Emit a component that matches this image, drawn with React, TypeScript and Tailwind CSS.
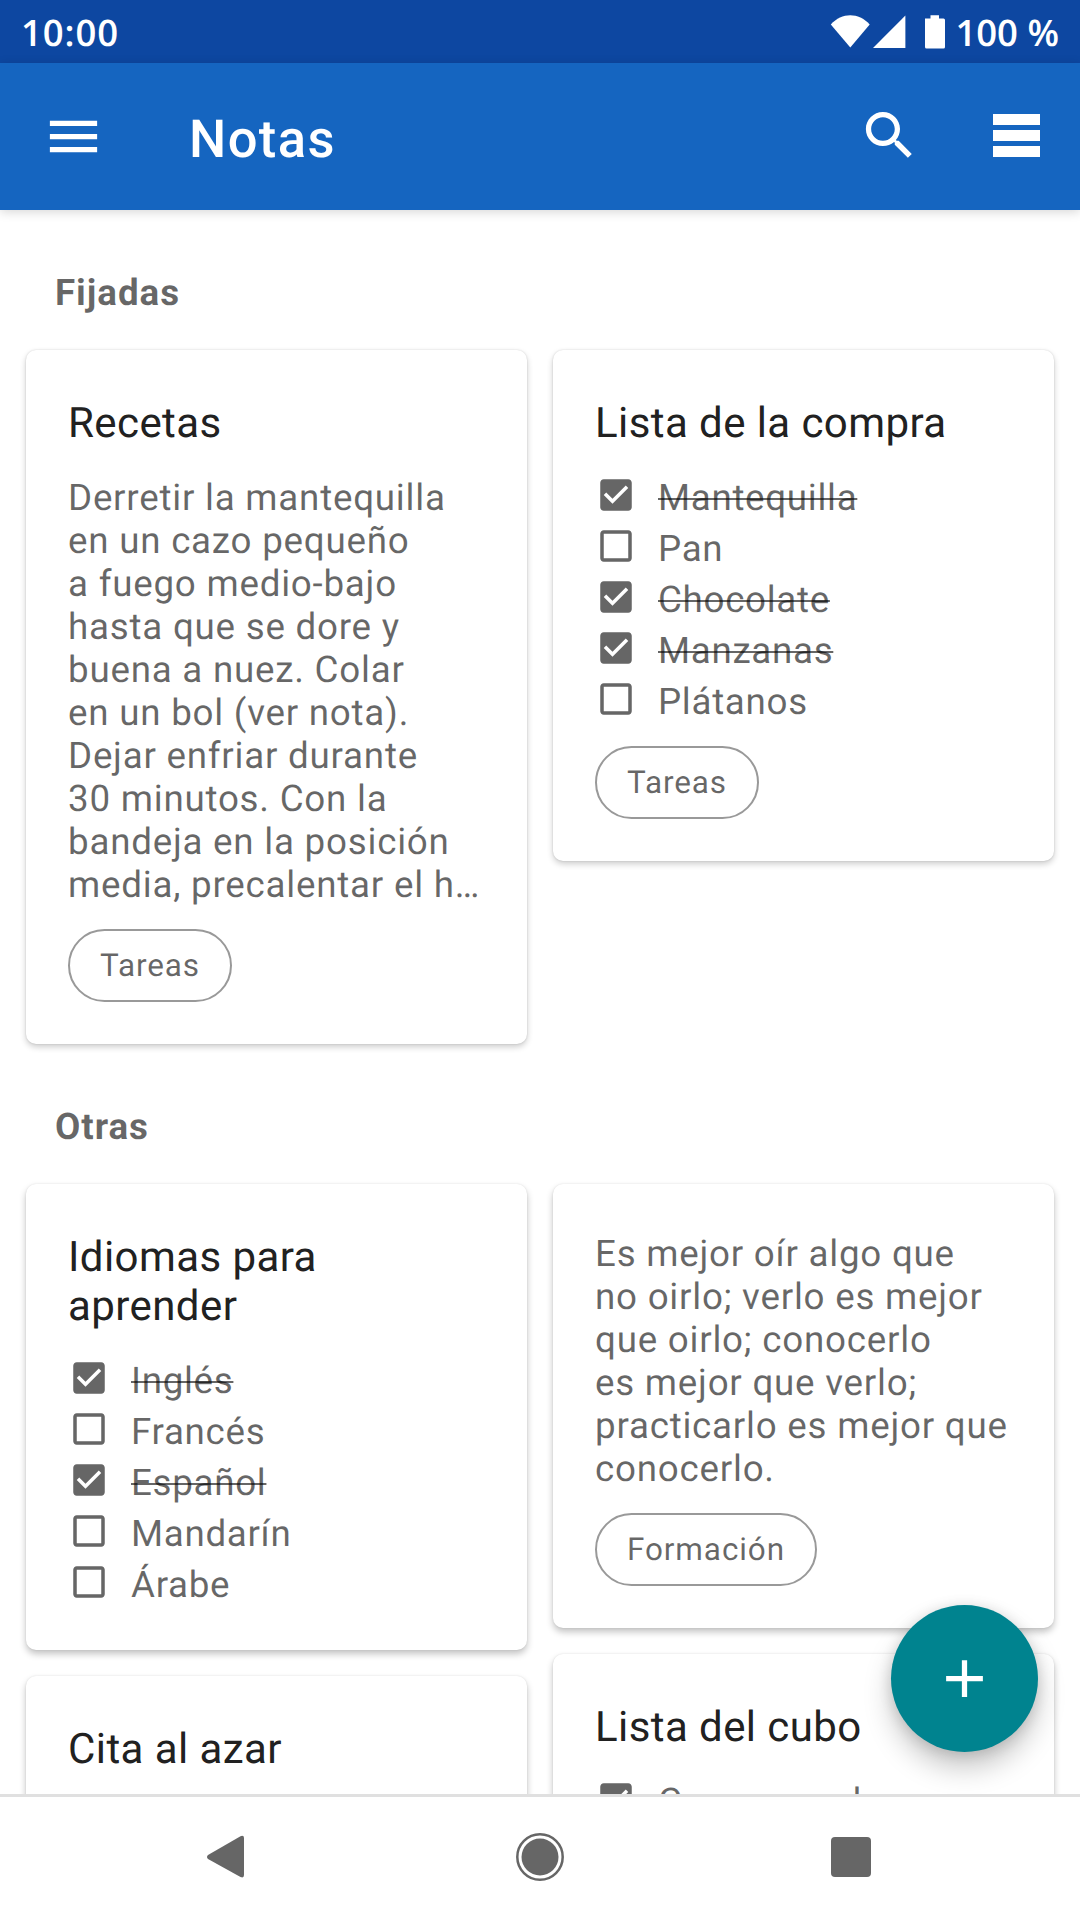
import React from "react";

type Item = { label: string; done: boolean };
type Note = { title?: string[]; lines?: string[]; items?: Item[]; chip?: string };

const recetas: Note = {
  title: ["Recetas"],
  lines: [
    "Derretir la mantequilla",
    "en un cazo pequeño",
    "a fuego medio-bajo",
    "hasta que se dore y",
    "buena a nuez. Colar",
    "en un bol (ver nota).",
    "Dejar enfriar durante",
    "30 minutos. Con la",
    "bandeja en la posición",
    "media, precalentar el h…",
  ],
  chip: "Tareas",
};

const compra: Note = {
  title: ["Lista de la compra"],
  items: [
    { label: "Mantequilla", done: true },
    { label: "Pan", done: false },
    { label: "Chocolate", done: true },
    { label: "Manzanas", done: true },
    { label: "Plátanos", done: false },
  ],
  chip: "Tareas",
};

const idiomas: Note = {
  title: ["Idiomas para", "aprender"],
  items: [
    { label: "Inglés", done: true },
    { label: "Francés", done: false },
    { label: "Español", done: true },
    { label: "Mandarín", done: false },
    { label: "Árabe", done: false },
  ],
};

const mejor: Note = {
  lines: [
    "Es mejor oír algo que",
    "no oirlo; verlo es mejor",
    "que oirlo; conocerlo",
    "es mejor que verlo;",
    "practicarlo es mejor que",
    "conocerlo.",
  ],
  chip: "Formación",
};

const cita: Note = { title: ["Cita al azar"] };

const cubo: Note = {
  title: ["Lista del cubo"],
  items: [{ label: "Comer una lasagna", done: true }],
};

function Checkbox({ done }: { done: boolean }) {
  return (
    <svg viewBox="0 0 24 24" className="-mt-[2.5px] size-[42px] shrink-0 fill-[#666666]">
      {done ? (
        <path d="M19 3H5c-1.11 0-2 .9-2 2v14c0 1.1.89 2 2 2h14c1.11 0 2-.9 2-2V5c0-1.1-.89-2-2-2zm-9 14l-5-5 1.41-1.41L10 14.17l7.59-7.59L19 8l-9 9z" />
      ) : (
        <path d="M19 5v14H5V5h14m0-2H5c-1.1 0-2 .9-2 2v14c0 1.1.9 2 2 2h14c1.1 0 2-.9 2-2V5c0-1.1-.9-2-2-2z" />
      )}
    </svg>
  );
}

function Card({ note, elevated }: { note: Note; elevated: boolean }) {
  return (
    <article
      className={
        elevated
          ? "rounded-[10px] bg-white px-[42px] pt-12 shadow-[0_0_2px_rgba(0,0,0,0.1),0_4px_7px_rgba(0,0,0,0.24)]"
          : "rounded-[10px] bg-white px-[42px] pt-12 shadow-[0_0_2px_rgba(0,0,0,0.14),0_3px_6px_rgba(0,0,0,0.2)]"
      }
    >
      {note.title && (
        <h3 className="mb-7 pt-px text-[42px] leading-[49px] tracking-[0.42px] whitespace-nowrap text-[#212121]">
          {note.title.map((t) => (
            <span key={t} className="block">{t}</span>
          ))}
        </h3>
      )}
      {note.lines && (
        <p className="text-[36.75px] leading-[43px] tracking-[0.76px] whitespace-nowrap text-black/60">
          {note.lines.map((l) => (
            <span key={l} className="block">{l}</span>
          ))}
        </p>
      )}
      {note.items && (
        <ul className="flex flex-col gap-2 text-[36.75px] leading-[43px] tracking-[0.68px] text-black/60">
          {note.items.map((i) => (
            <li key={i.label} className="flex h-[43px] items-start gap-[21px]">
              <Checkbox done={i.done} />
              <span className={i.done ? "whitespace-nowrap line-through decoration-2" : "whitespace-nowrap"}>{i.label}</span>
            </li>
          ))}
        </ul>
      )}
      {note.chip ? (
        <div className="flex pt-[23px] pb-[42px]">
          <span className="flex h-[73px] items-center rounded-full border-2 border-[#999999] px-[30px] text-[31.5px] tracking-[0.88px] text-black/60">
            {note.chip}
          </span>
        </div>
      ) : (
        <div className="h-11" />
      )}
    </article>
  );
}

function Section({ name, left, right, elevated = false }: { name: string; left: Note[]; right: Note[]; elevated?: boolean }) {
  return (
    <section className="px-[26px] pt-[61px]">
      <h2 className="mb-9 pl-[29px] text-[36.75px] leading-[43px] font-bold tracking-[0.95px] text-black/60">{name}</h2>
      <div className="grid grid-cols-2 items-start gap-[26px]">
        {[left, right].map((col, i) => (
          <div key={i} className="flex flex-col gap-[26px]">
            {col.map((n, j) => (
              <Card key={j} note={n} elevated={elevated} />
            ))}
          </div>
        ))}
      </div>
    </section>
  );
}

export default function App() {
  return (
    <div className="relative flex h-[1920px] w-[1080px] flex-col overflow-hidden bg-white font-['Roboto',sans-serif] [text-rendering:geometricPrecision]">
      <div className="z-10 flex h-[63px] shrink-0 items-center justify-between bg-[#0d47a1] px-[21px] font-['Open_Sans',sans-serif] text-[36.5px] leading-none font-semibold text-white">
        <span className="pt-[2px] tracking-[0.9px]">10:00</span>
        <div className="flex items-center">
          <svg viewBox="0 0 116 34" className="mr-[9px] h-[34px] w-[116px] fill-white">
            <path d="M0.800 9.500C12 -2.800 28.500 -2.800 39.700 9.500L20.300 32.600z" />
            <path d="M75.400 0.500V33H43z" />
            <path d="M95 3.500h5.500V0.300h8.500V3.500h4.500a1.500 1.500 0 0 1 1.500 1.500v27a1.500 1.500 0 0 1-1.500 1.500h-17a1.500 1.500 0 0 1-1.500-1.500z" />
          </svg>
          <span className="pt-[2px]">100 %</span>
        </div>
      </div>

      <header className="z-10 flex h-[147px] shrink-0 items-center bg-[#1565c0] pr-8 pl-[42px] text-white shadow-[0_2px_10px_rgba(0,0,0,0.16)]">
        <svg viewBox="0 0 24 24" className="size-[63px] fill-white">
          <path d="M3 18h18v-2H3v2zm0-5h18v-2H3v2zm0-7v2h18V6H3z" />
        </svg>
        <h1 className="ml-[84px] grow pt-[5px] text-[52.5px] leading-none font-medium tracking-[1.4px]">Notas</h1>
        <svg viewBox="0 0 24 24" className="mb-[2px] size-[63px] fill-white">
          <path d="M15.500 14h-.79l-.28-.27C15.410 12.590 16 11.110 16 9.500 16 5.910 13.090 3 9.500 3S3 5.910 3 9.500 5.910 16 9.500 16c1.610 0 3.090-.59 4.230-1.570l.27.28v.79l5 4.990L20.490 19l-4.990-5zm-6 0C7.010 14 5 11.990 5 9.500S7.010 5 9.500 5 14 7.010 14 9.500 11.990 14 9.500 14z" />
        </svg>
        <div className="mr-2 mb-[2px] ml-[72px] flex h-[43px] w-[47px] flex-col justify-between">
          <span className="h-[11px] bg-white" />
          <span className="h-[11px] bg-white" />
          <span className="h-[11px] bg-white" />
        </div>
      </header>

      <main className="h-[1584px] shrink-0 overflow-hidden">
        <Section name="Fijadas" left={[recetas]} right={[compra]} />
        <Section name="Otras" left={[idiomas, cita]} right={[mejor, cubo]} elevated />
      </main>

      <button className="absolute top-[1605px] left-[891px] flex size-[147px] items-center justify-center rounded-full bg-[#00838f] shadow-[0_16px_28px_rgba(0,0,0,0.22),0_2px_14px_rgba(0,0,0,0.14)]">
        <svg viewBox="0 0 24 24" className="size-[63px] fill-white">
          <path d="M19 13h-6v6h-2v-6H5v-2h6V5h2v6h6v2z" />
        </svg>
      </button>

      <nav className="z-10 flex h-[126px] shrink-0 items-center justify-between border-t-[3px] border-[#e0e0e0] bg-white pr-[209px] pb-[3px] pl-[207px]">
        <svg viewBox="0 0 42 44" className="h-[44px] w-[42px] fill-[#666666]">
          <path d="M1 20L33.500 1.200Q37 0 37 3V40Q37 43.500 33.500 42L1 24Q-1 22 1 20z" />
        </svg>
        <svg viewBox="0 0 48 48" className="size-12">
          <circle cx="24" cy="24" r="22.700" fill="none" stroke="#666666" strokeWidth="2.500" />
          <circle cx="24" cy="24" r="18.500" fill="#666666" />
        </svg>
        <span className="size-10 rounded-[4px] bg-[#666666]" />
      </nav>
    </div>
  );
}
